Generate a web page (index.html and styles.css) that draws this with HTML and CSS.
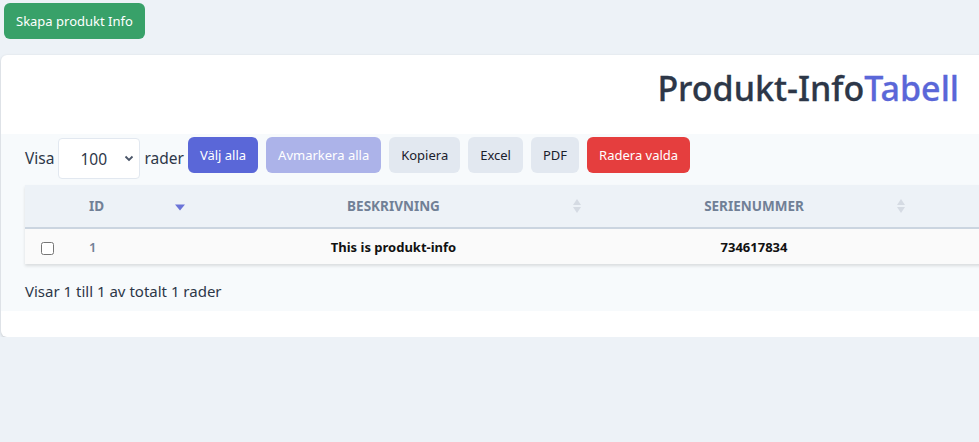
FILE: index.html
```html
<!DOCTYPE html>
<html lang="sv">
<head>
<meta charset="utf-8">
<title>Produkt-Info</title>
<link rel="stylesheet" href="styles.css">
</head>
<body>
<div class="top">
  <button class="btn btn-green">Skapa produkt Info</button>
</div>
<div class="card">
  <div class="card-head">
    <h1 class="title">Produkt-Info<span class="accent">Tabell</span></h1>
  </div>
  <div class="section">
    <div class="controls">
      <span class="lbl">Visa</span>
      <div class="select"><span>100</span><svg class="chev" width="10" height="7" viewBox="0 0 10 7"><path d="M1.5 1.5 L5 5 L8.5 1.5" fill="none" stroke="#4a5568" stroke-width="1.8"/></svg></div>
      <span class="lbl lbl-rader">rader</span>
      <button class="btn btn-indigo">Välj alla</button>
      <button class="btn btn-indigo-light">Avmarkera alla</button>
      <button class="btn btn-gray">Kopiera</button>
      <button class="btn btn-gray">Excel</button>
      <button class="btn btn-gray">PDF</button>
      <button class="btn btn-red">Radera valda</button>
    </div>
    <div class="table-wrap">
      <table class="tbl">
        <colgroup>
          <col class="c-check"><col class="c-id"><col class="c-desc"><col class="c-ser"><col class="c-rest">
        </colgroup>
        <thead>
          <tr>
            <th></th>
            <th class="th-left">ID<span class="sort"><svg width="10" height="8" viewBox="0 0 10 8"><path d="M0 1 H10 L5 7 Z" fill="#6b74d8"/></svg></span></th>
            <th>BESKRIVNING<span class="sort"><svg width="10" height="16" viewBox="0 0 10 16"><path d="M1 7 L5 1 L9 7 Z M1 9 L5 15 L9 9 Z" fill="#d5dbe3"/></svg></span></th>
            <th>SERIENUMMER<span class="sort"><svg width="10" height="16" viewBox="0 0 10 16"><path d="M1 7 L5 1 L9 7 Z M1 9 L5 15 L9 9 Z" fill="#d5dbe3"/></svg></span></th>
            <th></th>
          </tr>
        </thead>
        <tbody>
          <tr>
            <td class="td-check"><input type="checkbox"></td>
            <td class="td-id">1</td>
            <td class="td-main">This is produkt-info</td>
            <td class="td-main">734617834</td>
            <td></td>
          </tr>
        </tbody>
      </table>
    </div>
    <p class="info">Visar 1 till 1 av totalt 1 rader</p>
  </div>
</div>
</body>
</html>
```
FILE: styles.css
```css
html, body {
  margin: 0;
  overflow: hidden;
}
body {
  background: #edf2f7;
  font-family: "Noto Sans", "Open Sans", sans-serif;
  color: #2d3748;
}
.top {
  padding: 3px 0 0 4px;
}
.btn {
  font-family: inherit;
  font-size: 13px;
  height: 36px;
  padding: 0 12px;
  border: none;
  border-radius: 6px;
  cursor: pointer;
}
.btn-green { background: #38a169; color: #fff; }
.btn-indigo { background: #5a67d8; color: #fff; }
.btn-indigo-light { background: #acb3e9; color: #fff; }
.btn-gray { background: #e2e8f0; color: #1a202c; }
.btn-red { background: #e53e3e; color: #fff; }

.card {
  margin: 16px 0 0 1px;
  width: 1000px;
  background: #fff;
  border-radius: 6px;
  box-shadow: 0 1px 3px rgba(0,0,0,0.18);
  padding-bottom: 26px;
}
.card-head {
  height: 79px;
  width: 958px;
  display: flex;
  justify-content: flex-end;
}
.title {
  margin: 0;
  padding-top: 9px;
  font-size: 34px;
  font-weight: 500;
  line-height: 48px;
  color: #2d3748;
  -webkit-text-stroke: 0.3px currentColor;
}
.accent { color: #5a67d8; }

.section {
  background: #f7fafc;
  padding: 3px 0 0 24px;
  overflow: hidden;
}
.controls {
  display: flex;
  align-items: flex-start;
  gap: 8px;
}
.lbl {
  font-size: 15.5px;
  line-height: 20px;
  padding-top: 11px;
  color: #2d3748;
}
.lbl-rader {
  margin-right: -4px;
}
.select {
  margin: 1px -4px 0;
  height: 39px;
  background: #fff;
  border: 1px solid #e2e8f0;
  border-radius: 4px;
  display: flex;
  align-items: center;
  justify-content: space-between;
  padding: 0 5px 0 19px;
  box-sizing: content-box;
  width: 56px;
  font-size: 15.5px;
  color: #2d3748;
}
.select span { padding-left: 2px; }

.table-wrap {
  margin-top: 6px;
}
.tbl {
  border-collapse: collapse;
  width: 1100px;
  box-shadow: 0 2px 3px rgba(0,0,0,0.12);
}
.c-check { width: 50px; }
.c-id { width: 120px; }
.c-desc { width: 397px; }
.c-ser { width: 324px; }
.tbl th {
  background: #edf2f7;
  height: 42px;
  border-bottom: 2px solid #cbd5e0;
  font-size: 13.5px;
  font-weight: 700;
  color: #718096;
  text-align: center;
  position: relative;
  padding: 0;
}
.tbl th.th-left {
  text-align: left;
  padding-left: 14px;
}
.sort {
  position: absolute;
  right: 10px;
  top: 50%;
  transform: translateY(-50%);
  display: flex;
}
.th-left .sort { transform: translateY(-30%); }
.tbl td {
  background: #fafafa;
  height: 35px;
  padding: 0;
  font-size: 13px;
}
.td-check { text-align: left; padding-left: 16px !important; }
.td-check input { margin: 0; width: 13px; height: 13px; vertical-align: middle; }
.td-id {
  padding-left: 14px !important;
  color: #718096;
  font-weight: 600;
}
.td-main {
  text-align: center;
  font-weight: 700;
  color: #111;
}
.info {
  margin: 0;
  padding: 17px 0 10px;
  font-size: 15px;
  line-height: 20px;
  color: #2d3748;
}
```
